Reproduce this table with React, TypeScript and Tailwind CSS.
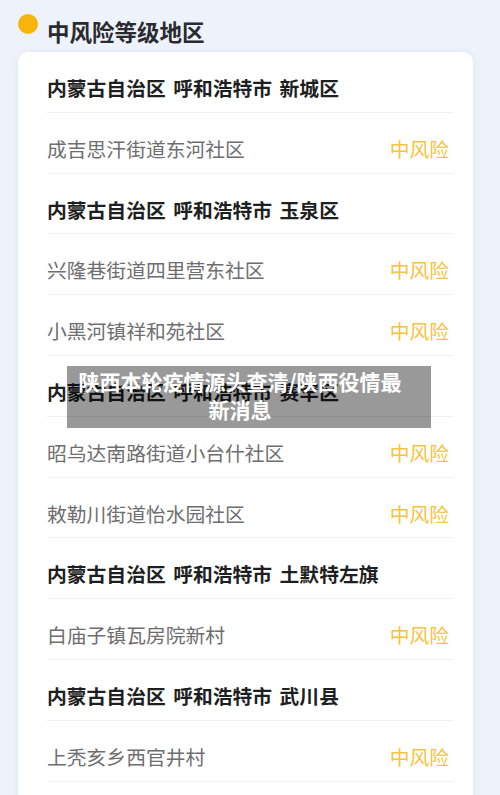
import React from "react";

type Row = { kind: "h"; text: string } | { kind: "i"; text: string };

const rows: Row[] = [
  { kind: "h", text: "内蒙古自治区 呼和浩特市 新城区" },
  { kind: "i", text: "成吉思汗街道东河社区" },
  { kind: "h", text: "内蒙古自治区 呼和浩特市 玉泉区" },
  { kind: "i", text: "兴隆巷街道四里营东社区" },
  { kind: "i", text: "小黑河镇祥和苑社区" },
  { kind: "h", text: "内蒙古自治区 呼和浩特市 赛罕区" },
  { kind: "i", text: "昭乌达南路街道小台什社区" },
  { kind: "i", text: "敕勒川街道怡水园社区" },
  { kind: "h", text: "内蒙古自治区 呼和浩特市 土默特左旗" },
  { kind: "i", text: "白庙子镇瓦房院新村" },
  { kind: "h", text: "内蒙古自治区 呼和浩特市 武川县" },
  { kind: "i", text: "上秃亥乡西官井村" },
];

export default function App() {
  return (
    <div
      className="relative w-[500px] h-[795px] overflow-hidden bg-[#eef2fa]"
      style={{ fontFamily: '"Noto Sans CJK SC", "Noto Sans", sans-serif' }}
    >
      <div className="flex items-center h-[52px] pl-[18px]">
        <div className="w-[20px] h-[20px] rounded-full bg-[#f7b50c] -mt-[4px]" />
        <div className="ml-[9px] text-[22.5px] leading-[28px] font-bold text-[#2a2b30] mt-[9px]">
          中风险等级地区
        </div>
      </div>
      <div className="ml-[18px] w-[455px] bg-white rounded-[10px] shadow-[0_0_6px_rgba(120,140,180,0.12)] pl-[29px] pr-[20px] h-[760px]">
        {rows.map((r, idx) => (
          <div
            key={idx}
            className="h-[60.8px] pt-[26px] border-b border-[#f0f0f0] flex justify-between"
          >
            {r.kind === "h" ? (
              <span className="text-[19.8px] leading-[20px] font-bold text-[#1e1f22] [word-spacing:3px]">
                {r.text}
              </span>
            ) : (
              <>
                <span className="text-[19.8px] leading-[20px] text-[#6e6e70]">
                  {r.text}
                </span>
                <span className="text-[19.8px] leading-[20px] text-[#f6c342] mr-[4px]">
                  中风险
                </span>
              </>
            )}
          </div>
        ))}
      </div>
      <div className="absolute left-[67px] top-[366px] w-[364px] h-[62px] bg-[rgba(0,0,0,0.4)] pl-[8px] pr-[26px] pt-[1px] text-center text-white font-bold text-[21px] leading-[28px]">
        陕西本轮疫情源头查清/陕西役情最新消息
      </div>
    </div>
  );
}
